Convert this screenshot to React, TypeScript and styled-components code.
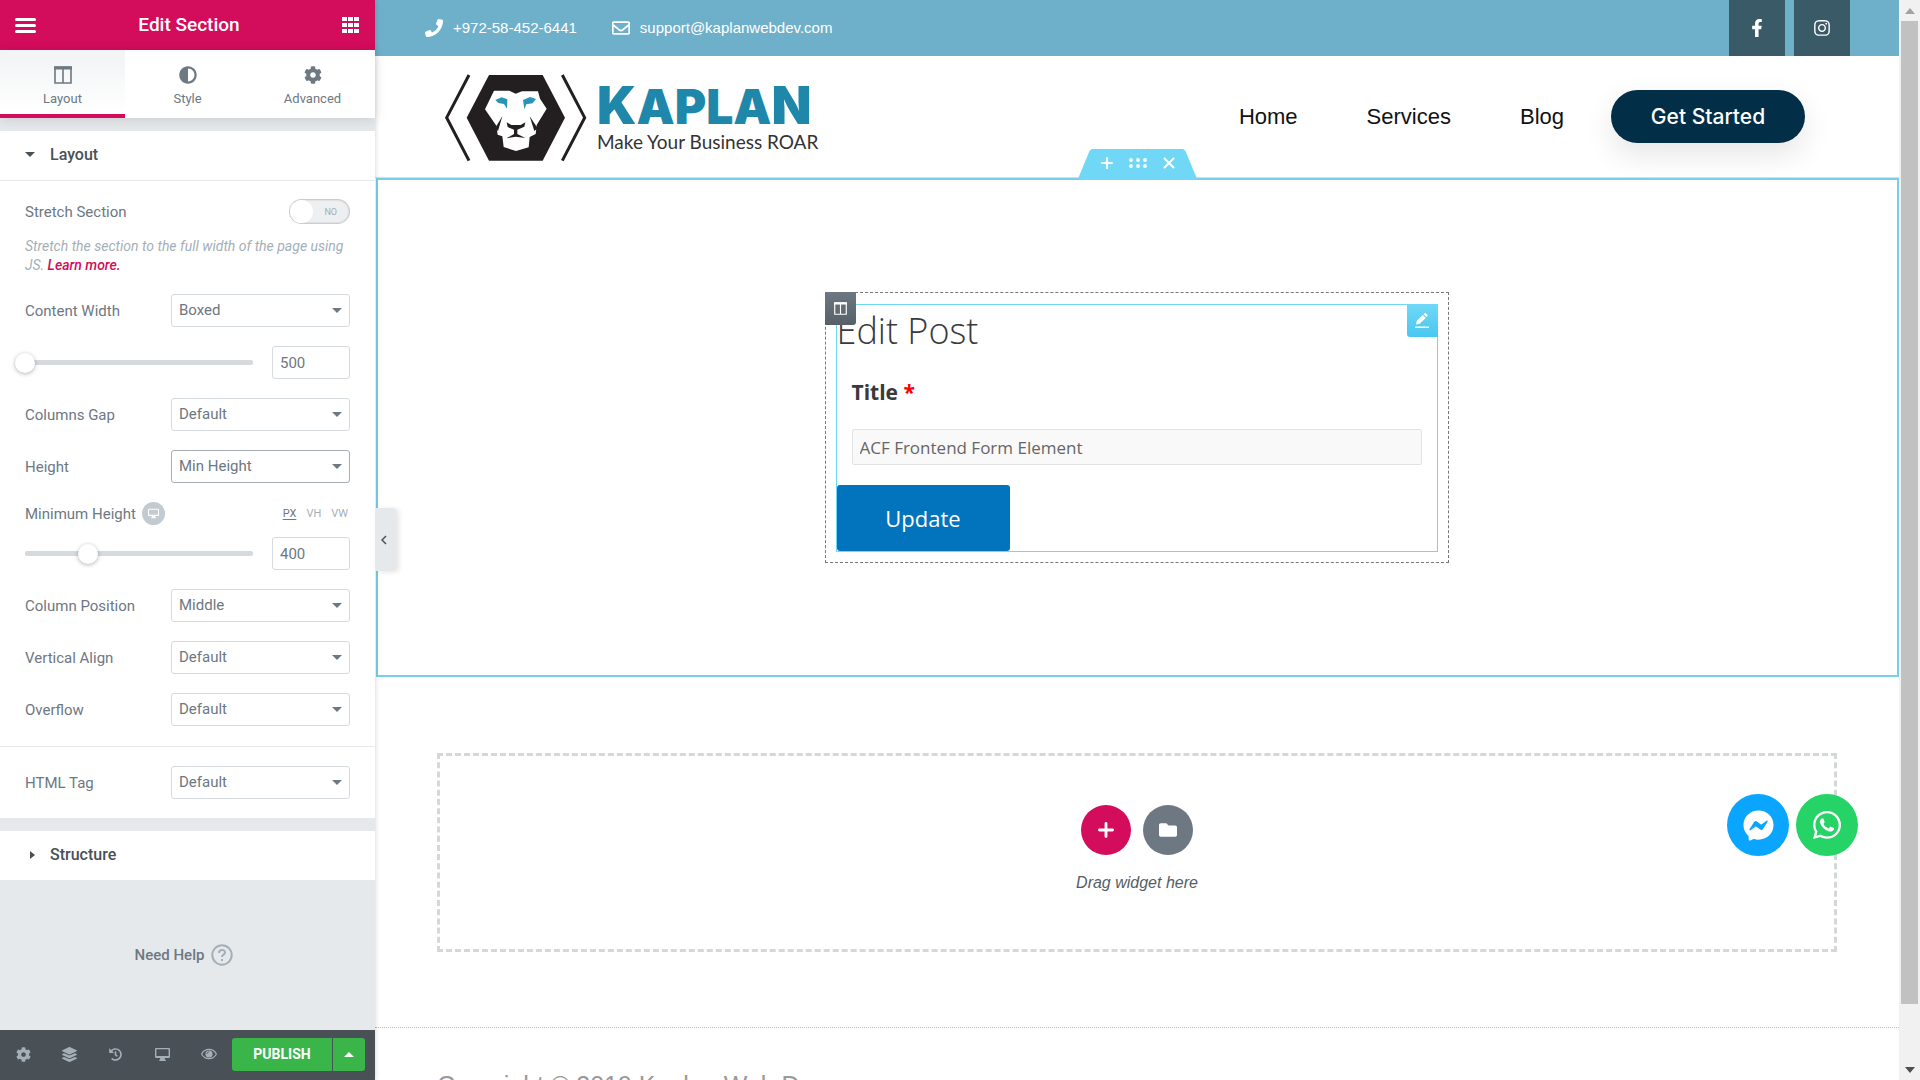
import React from 'react';
import styled, { createGlobalStyle } from 'styled-components';
import {
  FaPhoneAlt,
  FaPhone,
  FaRegEnvelope,
  FaFacebookF,
  FaInstagram,
  FaCog,
  FaLayerGroup,
  FaHistory,
  FaFolder,
  FaFacebookMessenger,
  FaWhatsapp,
  FaAdjust,
} from 'react-icons/fa';

const color = {
  pink: '#d30c5c',
  panel: '#e6e9ec',
  slate: '#6d7882',
  ink: '#495157',
  line: '#d5dadf',
  sky: '#71d7f7',
  bar: '#6eb0ca',
  green: '#39b54a',
};

const GlobalStyle = createGlobalStyle`
  *, *::before, *::after { box-sizing: border-box; }
  body { margin: 0; background: #fff; }
  button, input, select { font: inherit; color: inherit; }
  button { border: 0; padding: 0; background: none; cursor: pointer; }
  a { color: inherit; text-decoration: none; }
  svg { display: block; }
`;

const Editor = styled.div`
  display: grid;
  grid-template-columns: 375px minmax(0, 1fr);
  height: 100vh;
  overflow: hidden;
  font-family: Roboto, 'Liberation Sans', sans-serif;
`;

/* ---------- side panel ---------- */

const Panel = styled.aside`
  position: relative;
  z-index: 2;
  display: flex;
  flex-direction: column;
  background: ${color.panel};
  box-shadow: 0 0 5px rgba(0, 0, 0, 0.2);
  color: ${color.slate};
  font-size: 15px;
`;

const PanelHeader = styled.header`
  display: flex;
  align-items: center;
  justify-content: space-between;
  height: 50px;
  padding: 0 15px;
  background: ${color.pink};
  color: #fff;
`;

const PanelTitle = styled.h1`
  margin: 0;
  font-size: 19px;
  font-weight: 500;
  line-height: 24px;
`;

const Tabs = styled.nav`
  display: grid;
  grid-template-columns: repeat(3, 1fr);
  height: 68px;
  background: #fff;
  box-shadow: 0 2px 12px rgba(0, 0, 0, 0.12);
`;

const Tab = styled.button<{ $active?: boolean }>`
  display: flex;
  flex-direction: column;
  align-items: center;
  gap: 7px;
  padding-top: 16px;
  border-bottom: 4px solid ${(p) => (p.$active ? color.pink : 'transparent')};
  background: ${(p) => (p.$active ? 'linear-gradient(#f1f3f4, #fff)' : 'transparent')};
  font-size: 13px;
  line-height: 16px;
`;

const Section = styled.section`
  margin-top: 13px;
  background: #fff;
`;

const SectionHeading = styled.button`
  display: flex;
  align-items: center;
  gap: 12px;
  width: 100%;
  height: 49px;
  padding: 0 25px 2px;
  color: ${color.ink};
  font-size: 16px;
  font-weight: 500;
`;

const Caret = styled.span<{ $dir: 'down' | 'right' | 'up' }>`
  display: flex;
  width: 13px;
  padding-left: ${(p) => (p.$dir === 'right' ? '5px' : '0')};
  &::before {
    content: '';
    border: solid transparent;
    border-width: ${(p) => (p.$dir === 'right' ? '4px 0 4px 5px' : p.$dir === 'down' ? '5px 5px 0' : '0 5px 5px')};
    ${(p) =>
      p.$dir === 'right' ? 'border-left-color' : p.$dir === 'down' ? 'border-top-color' : 'border-bottom-color'}: currentColor;
  }
`;

const Controls = styled.div`
  display: flex;
  flex-direction: column;
  gap: 19px;
  padding: 18px 25px 19px;
  border-top: 1px solid ${color.panel};
`;

const Row = styled.div`
  display: flex;
  align-items: center;
  justify-content: space-between;
  line-height: 18px;
`;

const Stack = styled.div<{ $gap: number }>`
  display: flex;
  flex-direction: column;
  gap: ${(p) => p.$gap}px;
`;

const Hint = styled.p`
  margin: 0;
  color: #a4afb7;
  font-size: 14px;
  font-style: italic;
  line-height: 19px;
  a {
    color: ${color.pink};
    font-weight: 500;
  }
`;

const Switch = styled.span`
  position: relative;
  display: flex;
  align-items: center;
  justify-content: space-between;
  width: 61px;
  height: 25px;
  padding: 1px 13px 1px 1px;
  border-radius: 13px;
  background: #edeff0;
  box-shadow: inset 0 0 2px 1px rgba(0, 0, 0, 0.2);
  color: #a4afb7;
  font-size: 9px;
  &::before {
    content: '';
    width: 23px;
    height: 23px;
    border-radius: 50%;
    background: #fff;
  }
  input {
    position: absolute;
    inset: 0;
    width: 100%;
    height: 100%;
    margin: 0;
    opacity: 0;
  }
`;

const SelectBox = styled.span<{ $focus?: boolean }>`
  display: grid;
  align-items: center;
  width: 179px;
  select {
    grid-area: 1 / 1;
    appearance: none;
    width: 100%;
    height: 33px;
    padding: 0 7px 1px;
    border: 1px solid ${(p) => (p.$focus ? '#a4afb7' : color.line)};
    border-radius: 3px;
    background: #fff;
    outline: 0;
  }
  span {
    grid-area: 1 / 1;
    justify-self: end;
    margin-right: 5px;
    pointer-events: none;
  }
`;

const SliderRow = styled.div`
  display: grid;
  grid-template-columns: 1fr 78px;
  align-items: center;
  gap: 19px;
`;

const Slider = styled.span`
  display: flex;
  align-items: center;
  height: 5px;
  border-radius: 2px;
  background: ${color.line};
  input {
    flex: 1;
    appearance: none;
    height: 20px;
    margin: 0 -10px;
    background: transparent;
  }
  input::-webkit-slider-thumb {
    appearance: none;
    width: 20px;
    height: 20px;
    border-radius: 50%;
    background: #fff;
    box-shadow: 0 1px 4px rgba(0, 0, 0, 0.3);
  }
`;

const NumberBox = styled.input`
  width: 100%;
  height: 33px;
  padding: 0 7px;
  border: 1px solid ${color.line};
  border-radius: 3px;
  background: #fff;
`;

const LabelGroup = styled.div`
  display: flex;
  align-items: center;
  gap: 6px;
  height: 23px;
`;

const DeviceButton = styled.button`
  display: grid;
  place-items: center;
  width: 23px;
  height: 23px;
  border-radius: 50%;
  background: #c2cbd2;
  color: #fff;
`;

const Units = styled.div`
  display: flex;
  gap: 10px;
  padding-right: 2px;
`;

const Unit = styled.button<{ $active?: boolean }>`
  color: ${(p) => (p.$active ? color.slate : '#a4afb7')};
  font-size: 11px;
  text-decoration: ${(p) => (p.$active ? 'underline' : 'none')};
  text-underline-offset: 2px;
`;

const Rule = styled.hr`
  width: calc(100% + 50px);
  margin: 1px -25px 0;
  border: 0;
  border-top: 1px solid ${color.panel};
`;

const Help = styled.div`
  display: grid;
  flex: 1;
  place-items: center;
  font-weight: 500;
  a {
    display: flex;
    align-items: center;
  }
  svg {
    margin: 0 7px;
    color: #a4afb7;
  }
`;

const PanelFooter = styled.footer`
  display: flex;
  align-items: center;
  height: 50px;
  padding: 0 10px 2px 0;
  background: ${color.ink};
`;

const FooterTools = styled.div`
  display: grid;
  flex: 1;
  grid-template-columns: repeat(5, 1fr);
  color: #a4afb7;
  button {
    display: grid;
    place-items: center;
  }
`;

const Publish = styled.div`
  display: grid;
  grid-template-columns: 100px 32px;
  gap: 1px;
  height: 33px;
  color: #fff;
  button {
    display: grid;
    place-items: center;
    background: ${color.green};
    font-size: 14px;
    font-weight: 700;
  }
  button:first-child { border-radius: 3px 0 0 3px; }
  button:last-child { border-radius: 0 3px 3px 0; }
  button > span { width: 10px; }
`;

const Collapse = styled.button`
  position: absolute;
  top: 508px;
  left: 100%;
  display: grid;
  place-items: center;
  width: 21px;
  height: 63px;
  padding-right: 3px;
  border-radius: 0 3px 3px 0;
  background: ${color.panel};
  box-shadow: 3px 1px 5px rgba(0, 0, 0, 0.1);
`;

/* ---------- page preview ---------- */

const Preview = styled.div`
  display: grid;
  grid-template-columns: minmax(0, 1fr) 21px;
  height: 100vh;
  overflow: hidden;
  font-family: 'Liberation Sans', Arial, sans-serif;
`;

const Page = styled.main`
  position: relative;
  height: 100vh;
  overflow: hidden;
`;

const TopBar = styled.div`
  display: flex;
  justify-content: space-between;
  height: 56px;
  padding: 0 49px 0 50px;
  background: ${color.bar};
  color: #fff;
`;

const Contacts = styled.div`
  display: flex;
  align-items: center;
  gap: 35px;
  font-size: 15px;
  a {
    display: flex;
    align-items: center;
    gap: 10px;
    line-height: 20px;
  }
  svg { margin-bottom: 1px; }
`;

const Socials = styled.div`
  display: flex;
  gap: 9px;
  a {
    display: grid;
    place-items: center;
    width: 56px;
    background: #3a5a68;
  }
`;

const SiteHeader = styled.header`
  display: flex;
  align-items: center;
  justify-content: space-between;
  height: 122px;
  padding: 0 94px 0 69px;
  border-bottom: 1px solid #ddd;
`;

const Brand = styled.a`
  display: flex;
  align-items: center;
  gap: 10px;
  padding-top: 3px;
`;

const BrandText = styled.span`
  display: flex;
  flex-direction: column;
`;

const BrandName = styled.span`
  color: #1f87aa;
  font-family: Inter, sans-serif;
  font-size: 48px;
  font-weight: 900;
  line-height: 46px;
  b {
    font-size: 52px;
    font-weight: 900;
  }
`;

const Tagline = styled.span`
  color: #333;
  font-family: Lato, sans-serif;
  font-size: 19px;
  line-height: 24px;
`;

const SiteNav = styled.nav`
  display: flex;
  align-items: center;
  color: #111;
  font-size: 22px;
  a { margin-right: 69px; }
  a:nth-last-child(2) { margin-right: 47px; }
`;

const Cta = styled.button`
  width: 194px;
  height: 53px;
  border-radius: 27px;
  background: #022f47;
  box-shadow: 0 12px 30px rgba(0, 0, 0, 0.1);
  color: #fff;
  font-family: Inter, sans-serif;
  font-size: 21px;
  font-weight: 500;
`;

const EditedSection = styled.section`
  position: relative;
  display: flex;
  align-items: center;
  justify-content: center;
  min-height: 499px;
  margin-left: 1px;
  padding-right: 2px;
  border: 2px solid #79cfe8;
`;

const SectionHandle = styled.div`
  position: absolute;
  bottom: 100%;
  left: 50%;
  display: flex;
  align-items: center;
  justify-content: center;
  gap: 16px;
  width: 120px;
  height: 31px;
  padding-bottom: 3px;
  transform: translateX(-50%);
  background: ${color.sky};
  clip-path: polygon(10% 2px, 12% 0, 88% 0, 90% 2px, 100% 100%, 0 100%);
  color: #fff;
`;

const Column = styled.div`
  position: relative;
  width: 624px;
  padding: 11px 10px 10px;
  border: 1px dashed #777;
`;

const ColumnHandle = styled.button`
  position: absolute;
  top: -1px;
  left: -1px;
  display: grid;
  place-items: center;
  width: 31px;
  height: 33px;
  border-radius: 0 0 3px 0;
  background: linear-gradient(#6d7882, #556068);
  color: #fff;
`;

const Widget = styled.form`
  position: relative;
  display: flex;
  flex-direction: column;
  align-items: flex-start;
  border: 1px solid ${color.sky};
  color: #3a3a3a;
  font-family: 'Open Sans', 'Noto Sans', sans-serif;
`;

const WidgetHandle = styled.button`
  position: absolute;
  top: -1px;
  right: -1px;
  display: grid;
  place-items: center;
  width: 31px;
  height: 33px;
  border-radius: 0 0 0 3px;
  background: linear-gradient(#71d7f7, #48c8f0);
  color: #fff;
`;

const FormTitle = styled.h2`
  margin: 0;
  font-size: 36px;
  font-weight: 300;
  line-height: 52px;
`;

const Field = styled.div`
  display: flex;
  flex-direction: column;
  gap: 22px;
  width: 100%;
  padding: 20px 15px;
  label {
    font-size: 21px;
    font-weight: 700;
    line-height: 30px;
  }
  label span { color: #f00; }
  input {
    height: 36px;
    padding: 0 7px;
    border: 1px solid #e2e2e2;
    border-radius: 2px;
    background: #f9f9f9;
    color: #666;
    font-size: 17px;
  }
`;

const Submit = styled.button`
  width: 173px;
  height: 66px;
  border-radius: 3px;
  background: #0274be;
  color: #fff;
  font-size: 22px;
`;

const DropWrap = styled.div`
  display: flex;
  justify-content: center;
  padding: 76px 60px 75px;
  border-bottom: 1px dotted #bbb;
`;

const DropArea = styled.section`
  display: flex;
  flex: 1;
  flex-direction: column;
  align-items: center;
  gap: 16px;
  max-width: 1400px;
  padding: 49px 0 54px;
  border: 3px dashed #d5d8d8;
  p {
    margin: 0;
    color: #555d66;
    font-size: 16px;
    font-style: italic;
    line-height: 24px;
  }
`;

const RoundButtons = styled.div`
  display: flex;
  gap: 12px;
`;

const RoundButton = styled.button<{ $size: number; $bg: string }>`
  display: grid;
  place-items: center;
  width: ${(p) => p.$size}px;
  height: ${(p) => p.$size}px;
  border-radius: 50%;
  background: ${(p) => p.$bg};
  color: #fff;
`;

const Chat = styled.div`
  position: absolute;
  top: 794px;
  right: 41px;
  display: flex;
  gap: 7px;
`;

const Copyright = styled.footer`
  width: 100%;
  max-width: 1400px;
  margin: 0 auto;
  padding-top: 42px;
  color: #999;
  font-size: 25px;
  line-height: 30px;
`;

const Scrollbar = styled.div`
  display: flex;
  flex-direction: column;
  align-items: center;
  background: #f1f1f1;
  color: #505050;
`;

const ScrollArrow = styled.span`
  display: grid;
  place-items: center;
  height: 21px;
`;

const ScrollTrack = styled.div`
  flex: 1;
  width: 17px;
`;

const ScrollThumb = styled.div`
  height: 94.7%;
  background: #c1c1c1;
`;

/* ---------- drawings ---------- */

const Columns = ({ size }: { size: number }) => (
  <svg width={size} height={size} viewBox="0 0 18 18" fill="none" stroke="currentColor">
    <path d="M1 1h16v16H1z M9 2v15" strokeWidth="1.6" />
    <path d="M0 2h18" strokeWidth="3" />
  </svg>
);

const Monitor = ({ size }: { size: number }) => (
  <svg width={size} height={size} viewBox="0 0 16 16" fill="currentColor">
    <path fillRule="evenodd" d="M1.2 1h13.6c.7 0 1.2.5 1.2 1.200v8.300c0 .700-.5 1.200-1.200 1.200H10.500v1.800h1V15h-7v-1.500h1v-1.800H1.200C.5 11.700 0 11.200 0 10.500V2.200C0 1.500.5 1 1.200 1zM1.500 2.500v7.200h13V2.500z" />
  </svg>
);

const Eye = () => (
  <svg width="16" height="16" viewBox="0 0 16 16" fill="none" stroke="currentColor">
    <path d="M.6 8C3.700 1.800 12.300 1.800 15.400 8 12.300 14.200 3.700 14.200.6 8z" strokeWidth="1.200" />
    <circle cx="8" cy="8" r="3.600" fill="currentColor" stroke="none" />
    <path d="M5.900 8c0-1.200.9-2.100 2.100-2.100" stroke={color.ink} strokeWidth=".8" />
  </svg>
);

const Pencil = () => (
  <svg width="14" height="15" viewBox="0 0 14 15" fill="currentColor">
    <path d="M1 11.500l.8-3.700 6-5.800 2.900 2.900-6 5.800zM8.600 1.300l.9-.9c.5-.5 1-.5 1.500 0l1.300 1.300c.5.5.5 1 0 1.500l-.9.9zM0 13.500h14V15H0z" />
  </svg>
);

const Plus = ({ size }: { size: number }) => (
  <svg width={size} height={size} viewBox="0 0 14 14" stroke="currentColor" strokeWidth="2.500" strokeLinecap="round">
    <path d="M7 1.300v11.400M1.300 7h11.400" />
  </svg>
);

const Lion = () => (
  <svg width="143" height="88" viewBox="42 27 429 264" fill="#231f20">
    <g fill="none" stroke="#231f20" strokeWidth="9">
      <path d="M117 30L50 158l67 129M397 30l67 128-67 129" />
    </g>
    <path d="M177 30h161l67 128-67 129H177l-67-129z" />
    <path
      fill="#fff"
      d="M192 77h46l19 9 19-7h48l6 22 20 30-30 49-3 27-18 9-3 31-38 11-37-12-4-32-14-5-4-27-34-49z"
    />
    <path d="M217 154l-22 36 9 8zM299 154l24 36-10 8z" />
    <path d="M230 172l14 8h28l14-8-3 13-21 9v13l24 12-29-4-28 5 23-13V194l-19-8z" />
    <path fill="#2a94b8" d="M196 105l19-8 17 6-1 28-9-14-17-3zM318 102l-18-6-21 9 4 28 6-15 19-3z" />
  </svg>
);

/* ---------- building blocks ---------- */

type SelectProps = { id: string; label: string; value: string; focus?: boolean };

const SelectRow = ({ id, label, value, focus }: SelectProps) => (
  <Row>
    <label htmlFor={id}>{label}</label>
    <SelectBox $focus={focus}>
      <select id={id} defaultValue={value}>
        <option>{value}</option>
      </select>
      <Caret $dir="down" />
    </SelectBox>
  </Row>
);

type SizeProps = { label: string; value: number; min: number; max: number };

const SizeControl = ({ label, value, min, max }: SizeProps) => (
  <SliderRow>
    <Slider>
      <input type="range" aria-label={`${label} slider`} min={min} max={max} defaultValue={value} />
    </Slider>
    <NumberBox aria-label={label} defaultValue={value} />
  </SliderRow>
);

export default function App() {
  return (
    <Editor>
      <GlobalStyle />
      <Panel>
        <PanelHeader>
          <button aria-label="Menu">
            <svg width="21" height="15" viewBox="0 0 21 15" stroke="#fff" strokeWidth="3" strokeLinecap="round">
              <path d="M1.500 1.500h18M1.500 7.500h18M1.500 13.500h18" />
            </svg>
          </button>
          <PanelTitle>Edit Section</PanelTitle>
          <button aria-label="Widgets">
            <svg width="18" height="17" viewBox="0 0 18 17" fill="#fff">
              {[0, 6, 12].map((y) => [0, 6, 12].map((x) => <rect key={`${x}-${y}`} x={x} y={y} width="5" height="4" />))}
            </svg>
          </button>
        </PanelHeader>
        <Tabs>
          <Tab $active>
            <Columns size={18} />
            Layout
          </Tab>
          <Tab>
            <FaAdjust size={18} />
            Style
          </Tab>
          <Tab>
            <FaCog size={18} />
            Advanced
          </Tab>
        </Tabs>
        <Section>
          <SectionHeading>
            <Caret $dir="down" />
            Layout
          </SectionHeading>
          <Controls>
            <Stack $gap={13}>
              <Row>
                <label htmlFor="stretch">Stretch Section</label>
                <Switch>
                  <input id="stretch" type="checkbox" />
                  NO
                </Switch>
              </Row>
              <Hint>
                Stretch the section to the full width of the page using JS. <a href="#learn">Learn more.</a>
              </Hint>
            </Stack>
            <SelectRow id="content-width" label="Content Width" value="Boxed" />
            <SizeControl label="Content width in pixels" value={500} min={500} max={1600} />
            <SelectRow id="columns-gap" label="Columns Gap" value="Default" />
            <SelectRow id="height" label="Height" value="Min Height" focus />
            <Stack $gap={12}>
              <Row>
                <LabelGroup>
                  <span>Minimum Height</span>
                  <DeviceButton aria-label="Desktop">
                    <Monitor size={11} />
                  </DeviceButton>
                </LabelGroup>
                <Units>
                  <Unit $active>PX</Unit>
                  <Unit>VH</Unit>
                  <Unit>VW</Unit>
                </Units>
              </Row>
              <SizeControl label="Minimum height" value={400} min={0} max={1440} />
            </Stack>
            <SelectRow id="column-position" label="Column Position" value="Middle" />
            <SelectRow id="vertical-align" label="Vertical Align" value="Default" />
            <SelectRow id="overflow" label="Overflow" value="Default" />
            <Rule />
            <SelectRow id="html-tag" label="HTML Tag" value="Default" />
          </Controls>
        </Section>
        <Section>
          <SectionHeading>
            <Caret $dir="right" />
            Structure
          </SectionHeading>
        </Section>
        <Help>
          <a href="#help">
            Need Help
            <svg width="22" height="22" viewBox="0 0 22 22" fill="none" stroke="currentColor" strokeWidth="2">
              <circle cx="11" cy="11" r="9.700" />
              <path d="M8 9c0-4 6-4 6-.5 0 2.200-3 2-3 4.500" />
              <path d="M11 15v2" />
            </svg>
          </a>
        </Help>
        <PanelFooter>
          <FooterTools>
            <button aria-label="Settings"><FaCog size={15} /></button>
            <button aria-label="Navigator"><FaLayerGroup size={15} /></button>
            <button aria-label="History"><FaHistory size={13} /></button>
            <button aria-label="Responsive mode"><Monitor size={15} /></button>
            <button aria-label="Preview changes"><Eye /></button>
          </FooterTools>
          <Publish>
            <button>PUBLISH</button>
            <button aria-label="Save options">
              <Caret $dir="up" />
            </button>
          </Publish>
        </PanelFooter>
        <Collapse aria-label="Hide panel">
          <svg width="6" height="10" viewBox="0 0 6 10" fill="none" stroke="#495157" strokeWidth="1.500">
            <path d="M5 1L1 5l4 4" />
          </svg>
        </Collapse>
      </Panel>

      <Preview>
        <Page>
          <TopBar>
            <Contacts>
              <a href="tel:+972584526441">
                <FaPhone size={18} />
                +972-58-452-6441
              </a>
              <a href="mailto:support@kaplanwebdev.com">
                <FaRegEnvelope size={18} />
                support@kaplanwebdev.com
              </a>
            </Contacts>
            <Socials>
              <a href="#facebook" aria-label="Facebook"><FaFacebookF size={18} /></a>
              <a href="#instagram" aria-label="Instagram"><FaInstagram size={18} /></a>
            </Socials>
          </TopBar>
          <SiteHeader>
            <Brand href="#home">
              <Lion />
              <BrandText>
                <BrandName><b>K</b>APLA<b>N</b></BrandName>
                <Tagline>Make Your Business ROAR</Tagline>
              </BrandText>
            </Brand>
            <SiteNav>
              <a href="#home">Home</a>
              <a href="#services">Services</a>
              <a href="#blog">Blog</a>
              <Cta>Get Started</Cta>
            </SiteNav>
          </SiteHeader>

          <EditedSection>
            <SectionHandle>
              <button aria-label="Add section"><Plus size={12} /></button>
              <button aria-label="Edit section">
                <svg width="18" height="10" viewBox="0 0 18 10" fill="#fff">
                  {[2, 9, 16].map((x) => [2, 8].map((y) => <circle key={`${x}-${y}`} cx={x} cy={y} r="1.900" />))}
                </svg>
              </button>
              <button aria-label="Delete section">
                <svg width="12" height="12" viewBox="0 0 12 12" stroke="#fff" strokeWidth="2" strokeLinecap="round">
                  <path d="M1.500 1.500l9 9M10.500 1.500l-9 9" />
                </svg>
              </button>
            </SectionHandle>
            <Column>
              <Widget>
                <FormTitle>Edit Post</FormTitle>
                <Field>
                  <label htmlFor="post-title">Title <span>*</span></label>
                  <input id="post-title" defaultValue="ACF Frontend Form Element" />
                </Field>
                <Submit type="button">Update</Submit>
                <WidgetHandle type="button" aria-label="Edit widget"><Pencil /></WidgetHandle>
              </Widget>
              <ColumnHandle aria-label="Edit column"><Columns size={13} /></ColumnHandle>
            </Column>
          </EditedSection>

          <DropWrap>
            <DropArea>
              <RoundButtons>
                <RoundButton $size={50} $bg={color.pink} aria-label="Add new section"><Plus size={16} /></RoundButton>
                <RoundButton $size={50} $bg={color.slate} aria-label="Add template"><FaFolder size={18} /></RoundButton>
              </RoundButtons>
              <p>Drag widget here</p>
            </DropArea>
          </DropWrap>
          <Copyright>Copyright © 2019 Kaplan Web Dev</Copyright>

          <Chat>
            <RoundButton $size={62} $bg="#0aa5ff" aria-label="Messenger"><FaFacebookMessenger size={31} /></RoundButton>
            <RoundButton $size={62} $bg="#25d366" aria-label="WhatsApp"><FaWhatsapp size={32} /></RoundButton>
          </Chat>
        </Page>
        <Scrollbar aria-hidden="true">
          <ScrollArrow>
            <svg width="10" height="6" viewBox="0 0 10 6" fill="#a3a3a3"><path d="M0 6l5-6 5 6z" /></svg>
          </ScrollArrow>
          <ScrollTrack>
            <ScrollThumb />
          </ScrollTrack>
          <ScrollArrow>
            <svg width="10" height="6" viewBox="0 0 10 6" fill="currentColor"><path d="M0 0l5 6 5-6z" /></svg>
          </ScrollArrow>
        </Scrollbar>
      </Preview>
    </Editor>
  );
}
